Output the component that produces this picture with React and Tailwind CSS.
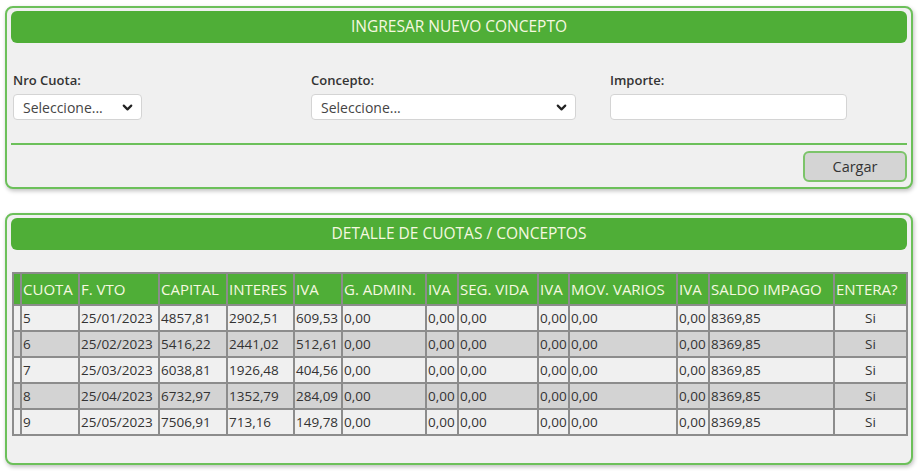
import { ChevronDown } from "lucide-react";

const cols = [8, 58, 80, 68, 67, 48, 84, 32, 80, 31, 108, 32, 125, 73];
const heads = ["", "CUOTA", "F. VTO", "CAPITAL", "INTERES", "IVA", "G. ADMIN.", "IVA", "SEG. VIDA", "IVA", "MOV. VARIOS", "IVA", "SALDO IMPAGO", "ENTERA?"];

const rows = [
    ["5", "25/01/2023", "4857,81", "2902,51", "609,53"],
    ["6", "25/02/2023", "5416,22", "2441,02", "512,61"],
    ["7", "25/03/2023", "6038,81", "1926,48", "404,56"],
    ["8", "25/04/2023", "6732,97", "1352,79", "284,09"],
    ["9", "25/05/2023", "7506,91", "713,16", "149,78"],
];

function Panel({ title, children, className }) {
    return (
        <div className={`rounded-lg border-2 border-[#6cc05a] bg-[#f0f0f0] shadow-[1px_2px_4px_rgba(0,0,0,0.25)] px-[4px] pt-[3px] ${className}`}>
            <div className="h-[32px] rounded-md bg-[#4fae37] flex items-center justify-center text-[15.5px] text-[#f6f8e0]">
                {title}
            </div>
            {children}
        </div>
    );
}

function Select({ width }) {
    return (
        <div className={`h-[26px] ${width} bg-white border border-[#d4d4d4] rounded-[4px] flex items-center justify-between pl-[9px] pr-[6px] text-[14px] text-[#444]`}>
            <span>Seleccione...</span>
            <ChevronDown className="w-[15px] h-[15px] text-[#222]" strokeWidth={3.5} />
        </div>
    );
}

export default function App() {
    return (
        <div className="w-[922px] h-[471px] bg-white pl-[5px] pt-[6px] font-['Open_Sans',sans-serif]">
            {/* Ingresar nuevo concepto */}
            <Panel title="INGRESAR NUEVO CONCEPTO" className="w-[908px] h-[183px]">
                <div className="grid grid-cols-[298px_299px_1fr] pl-[2px] pt-[28px]">
                    <div>
                        <div className="text-[13px] font-semibold text-[#333] mb-[5px] h-[18px]">Nro Cuota:</div>
                        <Select width="w-[129px]" />
                    </div>
                    <div>
                        <div className="text-[13px] font-semibold text-[#333] mb-[5px] h-[18px]">Concepto:</div>
                        <Select width="w-[265px]" />
                    </div>
                    <div>
                        <div className="text-[13px] font-semibold text-[#333] mb-[5px] h-[18px]">Importe:</div>
                        <div className="h-[26px] w-[237px] bg-white border border-[#d4d4d4] rounded-[4px]" />
                    </div>
                </div>
                <div className="mt-[23px] h-[2px] bg-[#6cc05a]" />
                <div className="flex justify-end pt-[6px]">
                    <button className="w-[104px] h-[31px] bg-[#d4d4d4] border-2 border-[#7cc46a] rounded-md text-[14.5px] text-[#333]">
                        Cargar
                    </button>
                </div>
            </Panel>

            {/* Detalle de cuotas */}
            <Panel title="DETALLE DE CUOTAS / CONCEPTOS" className="w-[908px] h-[252px] mt-[24px]">
                <div className="pt-[22px] pl-[1px]">
                    <table className="table-fixed border-collapse w-[894px] border-2 border-[#8c8c8c]">
                        <colgroup>
                            {cols.map((w, i) => (
                                <col key={i} style={{ width: w }} />
                            ))}
                        </colgroup>
                        <thead>
                            <tr className="h-[32px] bg-[#4fae37]">
                                {heads.map((h, i) => (
                                    <th key={i} className="border-2 border-[#8c8c8c] px-[1px] text-left font-normal text-[15px] text-[#f6f8e0] whitespace-nowrap">
                                        {h}
                                    </th>
                                ))}
                            </tr>
                        </thead>
                        <tbody>
                            {rows.map((r, ri) => {
                                const cells = ["", ...r, "0,00", "0,00", "0,00", "0,00", "0,00", "0,00", "8369,85"];
                                return (
                                    <tr key={ri} className={`h-[26px] ${ri % 2 === 0 ? "bg-[#f0f0f0]" : "bg-[#d3d3d3]"}`}>
                                        {cells.map((c, ci) => (
                                            <td key={ci} className="border-2 border-[#8c8c8c] px-[1px] text-[13.5px] text-[#333] whitespace-nowrap">
                                                {c}
                                            </td>
                                        ))}
                                        <td className="border-2 border-[#8c8c8c] text-center text-[13.5px] text-[#333]">Si</td>
                                    </tr>
                                );
                            })}
                        </tbody>
                    </table>
                </div>
            </Panel>
        </div>
    );
}
